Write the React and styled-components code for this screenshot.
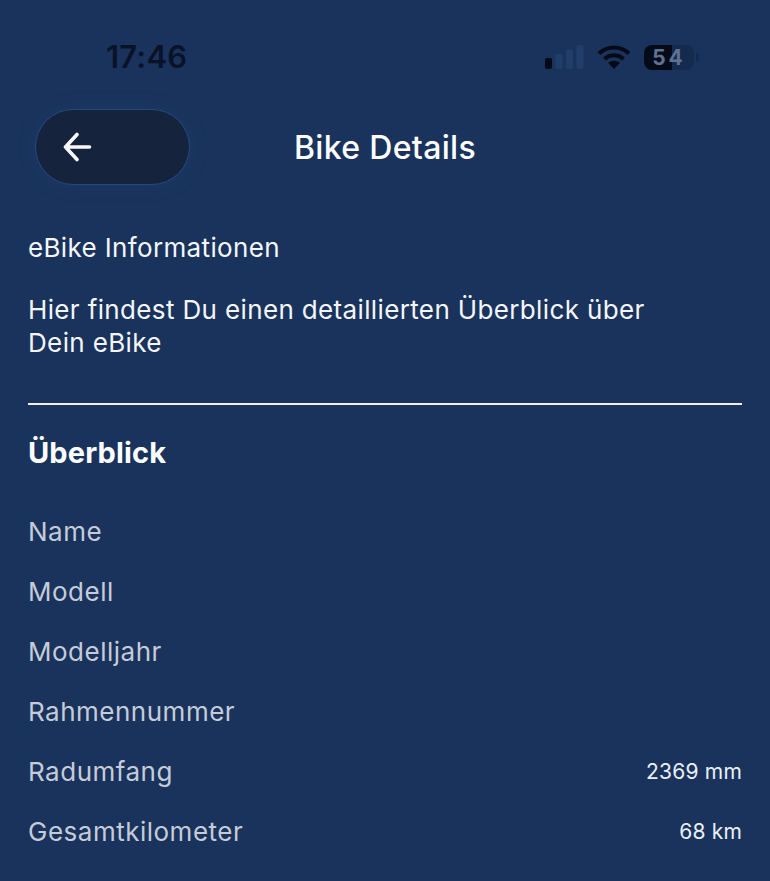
import React from "react";
import styled, { createGlobalStyle } from "styled-components";

const Global = createGlobalStyle`
  html, body { margin: 0; padding: 0; background: #1a335c; }
  body { font-family: Inter, "Noto Sans", "Liberation Sans", sans-serif; }
`;
const Page = styled.div`
  width: 770px; height: 881px; overflow: hidden; background: #1a335c; color: #fff;
  display: flex; flex-direction: column;
`;
const StatusBar = styled.div`
  height: 109px; box-sizing: border-box; padding: 37px 71px 0 106px;
  display: flex; justify-content: space-between; align-items: flex-start;
`;
const Clock = styled.div`
  font-size: 31px; line-height: 40px; font-weight: 600; color: #0a1228; letter-spacing: 0.2px;
`;
const StatusIcons = styled.div`
  display: flex; align-items: center; gap: 13px; height: 40px;
`;
const Battery = styled.div`
  width: 50px; height: 25px; border-radius: 8px; overflow: hidden;
  background: linear-gradient(90deg, #050a18 0 56%, #142a4e 56% 100%);
  font-size: 21px; font-weight: 700; color: #5f7294; line-height: 25px; text-align: center; letter-spacing: 3px;
`;
const BatteryWrap = styled.div`
  display: flex; align-items: center; gap: 2px;
`;
const BatteryCap = styled.div`
  width: 3px; height: 9px; border-radius: 0 3px 3px 0; background: #142a4e;
`;
const Header = styled.header`
  height: 76px; padding-left: 35px; position: relative; display: flex; align-items: center;
`;
const BackButton = styled.button`
  width: 155px; height: 76px; border-radius: 38px; box-sizing: border-box; padding: 0 0 0 27px;
  background: #16233d; border: 1.5px solid #234a80; box-shadow: 0 0 18px rgba(30, 70, 130, 0.3);
  display: flex; align-items: center; color: #fff;
`;
const Title = styled.h1`
  position: absolute; left: 0; right: 0; top: 1px; margin: 0; text-align: center;
  font-size: 32px; font-weight: 500; line-height: 76px; letter-spacing: 0.35px; pointer-events: none;
`;
const Content = styled.main`
  padding: 46px 28px 0; display: flex; flex-direction: column;
`;
const Lead = styled.p`
  margin: 0; font-size: 26px; line-height: 33px; color: #f4f6fa; letter-spacing: 0.35px;
`;
const Description = styled(Lead)`
  margin-top: 29px; max-width: 640px; letter-spacing: 0.36px;
`;
const Divider = styled.hr`
  margin: 44px 0 0; border: 0; height: 1.5px; background: #eef1f5;
`;
const Section = styled.h2`
  margin: 28px 0 0; font-size: 29px; line-height: 40px; font-weight: 700; letter-spacing: 0.13px;
`;
const Rows = styled.div`
  margin-top: 29px; display: flex; flex-direction: column;
`;
const Row = styled.div`
  height: 60px; display: flex; justify-content: space-between; align-items: center;
`;
const Label = styled.span`
  font-size: 26px; color: #c5ccd9; letter-spacing: 0.5px;
`;
const Value = styled.span`
  font-size: 21px; color: #eaf0f7; letter-spacing: 0.2px;
`;

const rows = [
  ["Name"], ["Modell"], ["Modelljahr"], ["Rahmennummer"],
  ["Radumfang", "2369 mm"], ["Gesamtkilometer", "68 km"],
];

export default function App() {
  return (
    <Page>
      <Global />
      <StatusBar>
        <Clock>17:46</Clock>
        <StatusIcons>
          <svg width="39" height="24" viewBox="0 0 39 24">
            <rect x="0" y="13" width="7" height="11" rx="2" fill="#050a18" />
            <rect x="10.500" y="9" width="7" height="15" rx="2" fill="#213e6b" />
            <rect x="21" y="4.500" width="7" height="19.500" rx="2" fill="#213e6b" />
            <rect x="31.500" y="0" width="7" height="24" rx="2" fill="#213e6b" />
          </svg>
          <svg width="34" height="26" viewBox="0 0 34 26" fill="none" stroke="#050a18" strokeWidth="4.200">
            <path d="M2 9.500C10.500 1.500 23.500 1.500 32 9.500" />
            <path d="M7.500 15C13 10 21 10 26.500 15" />
            <path d="M17 25l-6-6.200c3.300-2.800 8.700-2.800 12 0z" fill="#050a18" stroke="none" />
          </svg>
          <BatteryWrap>
            <Battery>54</Battery>
            <BatteryCap />
          </BatteryWrap>
        </StatusIcons>
      </StatusBar>
      <Header>
        <BackButton aria-label="Zurück">
          <svg width="30" height="30" viewBox="0 0 30 30" fill="none" stroke="#f7f9fc" strokeWidth="3.600" strokeLinecap="round" strokeLinejoin="round">
            <path d="M2.500 15H26.500M14 2.500L2.500 15 14 27.500" />
          </svg>
        </BackButton>
        <Title>Bike Details</Title>
      </Header>
      <Content>
        <Lead>eBike Informationen</Lead>
        <Description>Hier findest Du einen detaillierten Überblick über Dein eBike</Description>
        <Divider />
        <Section>Überblick</Section>
        <Rows>
          {rows.map(([label, value]) => (
            <Row key={label}>
              <Label>{label}</Label>
              {value && <Value>{value}</Value>}
            </Row>
          ))}
        </Rows>
      </Content>
    </Page>
  );
}
